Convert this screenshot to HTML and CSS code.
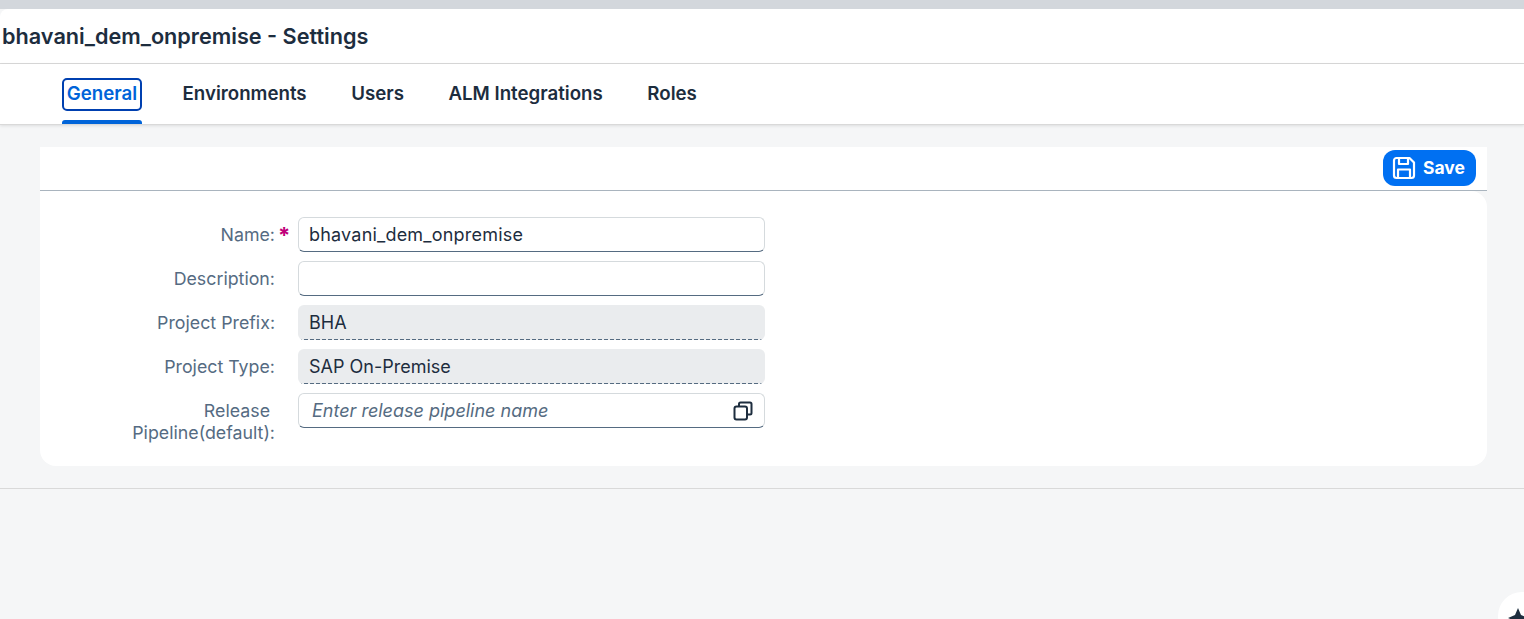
FILE: index.html
```html
<!DOCTYPE html>
<html>
<head>
    <title>Settings</title>
    <link rel="stylesheet" href="styles.css">
</head>
<body>
    <div class="topstrip"></div>
    <div class="titlebar">
        <h1>bhavani_dem_onpremise - Settings</h1>
    </div>
    <div class="tabs">
        <a class="tab active"><span>General</span></a>
        <a class="tab"><span>Environments</span></a>
        <a class="tab"><span>Users</span></a>
        <a class="tab"><span>ALM Integrations</span></a>
        <a class="tab"><span>Roles</span></a>
    </div>
    <div class="content">
        <div class="toolbar">
            <button class="save">
                <svg width="24" height="24" viewBox="0 0 24 24" fill="none" stroke="white" stroke-width="2.2" stroke-linejoin="round">
                    <path d="M4.5 2h13L22 6.500v13a2.500 2.500 0 0 1-2.500 2.500h-15A2.500 2.500 0 0 1 2 19.500v-15A2.500 2.500 0 0 1 4.500 2z"/>
                    <path d="M7 2v6h9V2M6 22v-8.500h12V22"/>
                </svg>
                <span>Save</span>
            </button>
        </div>
        <div class="card">
            <div class="row">
                <label class="required">Name:</label>
                <div class="field filled">bhavani_dem_onpremise</div>
            </div>
            <div class="row">
                <label>Description:</label>
                <div class="field"></div>
            </div>
            <div class="row">
                <label>Project Prefix:</label>
                <div class="field readonly">BHA</div>
            </div>
            <div class="row">
                <label>Project Type:</label>
                <div class="field readonly">SAP On-Premise</div>
            </div>
            <div class="row">
                <label>Release&nbsp;<br>Pipeline(default):</label>
                <div class="field placeholder">
                    Enter release pipeline name
                    <svg width="20" height="20" viewBox="0 0 20 20" fill="none" stroke="#1d2d3e" stroke-width="2">
                        <rect x="1.500" y="5.500" width="12.500" height="13" rx="2"/>
                        <path d="M6 5.500V3a1.500 1.500 0 0 1 1.500-1.500H17A1.500 1.500 0 0 1 18.500 3v9a1.500 1.500 0 0 1-1.500 1.500h-3"/>
                    </svg>
                </div>
            </div>
        </div>
    </div>
    <div class="divider"></div>
    <div class="assistant">
        <svg width="20" height="20" viewBox="0 0 20 20"><path d="M10 0l3 7 7 3-7 3-3 7-3-7-7-3 7-3z" fill="#1d2d3e"/></svg>
    </div>
</body>
</html>
```

FILE: styles.css
```css
* {
    box-sizing: border-box;
}

html, body {
    height: 100%;
}

body {
    margin: 0;
    overflow: hidden;
    position: relative;
    background-color: #f5f6f7;
    color: #1d2d3e;
    font-family: Inter, "Noto Sans", "Liberation Sans", sans-serif;
}

.topstrip {
    height: 9px;
    background-color: #d3d7dc;
}

.titlebar {
    height: 55px;
    padding-left: 2px;
    display: flex;
    align-items: center;
    background-color: white;
    border-top-left-radius: 8px;
    border-bottom: 1px solid #d9d9d9;
}

.titlebar h1 {
    margin: 0;
    font-size: 21.660px;
    font-weight: 600;
    line-height: 24px;
}

.tabs {
    height: 61px;
    padding-left: 62px;
    display: flex;
    gap: 36.500px;
    background-color: white;
    border-bottom: 1px solid #d9d9d9;
    box-shadow: 0 1px 3px rgba(0, 0, 0, 0.1);
}

.tab {
    position: relative;
    height: 60px;
    padding-top: 14px;
    font-size: 18.700px;
    font-weight: 600;
    color: #1d2d3e;
}

.tab span {
    display: block;
    height: 33px;
    line-height: 28px;
    padding: 0 2px;
    border: 2px solid transparent;
    border-radius: 5px;
}

.tab.active {
    color: #0064d9;
}

.tab.active::after {
    content: "";
    position: absolute;
    left: 0;
    right: 0;
    bottom: 0;
    height: 4px;
    background-color: #0064d9;
    border-radius: 3px 3px 0 0;
}

.tab.active span {
    padding: 0 2.800px;
    border-color: #0040b0;
}

.content {
    margin: 22px 37px 0 40px;
}

.toolbar {
    height: 44px;
    padding: 3px 11px 0 0;
    display: flex;
    justify-content: flex-end;
    background-color: white;
    border-bottom: 1px solid #a9b4be;
}

.save {
    height: 36px;
    width: 93px;
    padding: 0 0 0 9px;
    display: flex;
    align-items: center;
    gap: 7px;
    background-color: #0070f2;
    color: white;
    border: none;
    border-radius: 12px;
    font-family: inherit;
    font-size: 17.500px;
    font-weight: 700;
}

.save span {
    margin-bottom: 2px;
}

.card {
    height: 275px;
    padding-top: 26px;
    display: flex;
    flex-direction: column;
    gap: 10px;
    background-color: white;
    border-radius: 0 16px 16px 16px;
}

.row {
    display: flex;
    align-items: flex-start;
    height: 34px;
}

.row label {
    width: 235px;
    margin-right: 23px;
    padding-top: 7px;
    text-align: right;
    font-size: 17.800px;
    line-height: 22px;
    color: #556b82;
    position: relative;
}

.row label.required::after {
    content: "*";
    position: absolute;
    left: 238px;
    top: 7px;
    color: #c0007a;
    font-size: 22px;
    font-weight: 700;
}

.field {
    width: 467px;
    height: 35px;
    padding: 0 10px;
    display: flex;
    align-items: center;
    justify-content: space-between;
    background-color: white;
    border: 1px solid #d5dadd;
    border-bottom-color: #556b81;
    border-radius: 6px;
    font-size: 18px;
}

.field.filled {
    letter-spacing: 0.2px;
}

.field.readonly {
    padding-left: 11px;
    background-color: #eaecee;
    background-image: repeating-linear-gradient(to right, #556b81 0 4px, transparent 4px 6px);
    background-size: 100% 1px;
    background-position: bottom;
    background-repeat: no-repeat;
    border: none;
}

.field.placeholder {
    padding-left: 13px;
    padding-right: 11px;
    color: #556b81;
    font-style: italic;
}

.divider {
    margin-top: 22px;
    border-top: 1px solid #d9d9d9;
}

.assistant {
    position: absolute;
    left: 1498px;
    top: 592px;
    width: 48px;
    height: 48px;
    padding: 16px 0 0 10px;
    background-color: white;
    border-radius: 50%;
}
```
